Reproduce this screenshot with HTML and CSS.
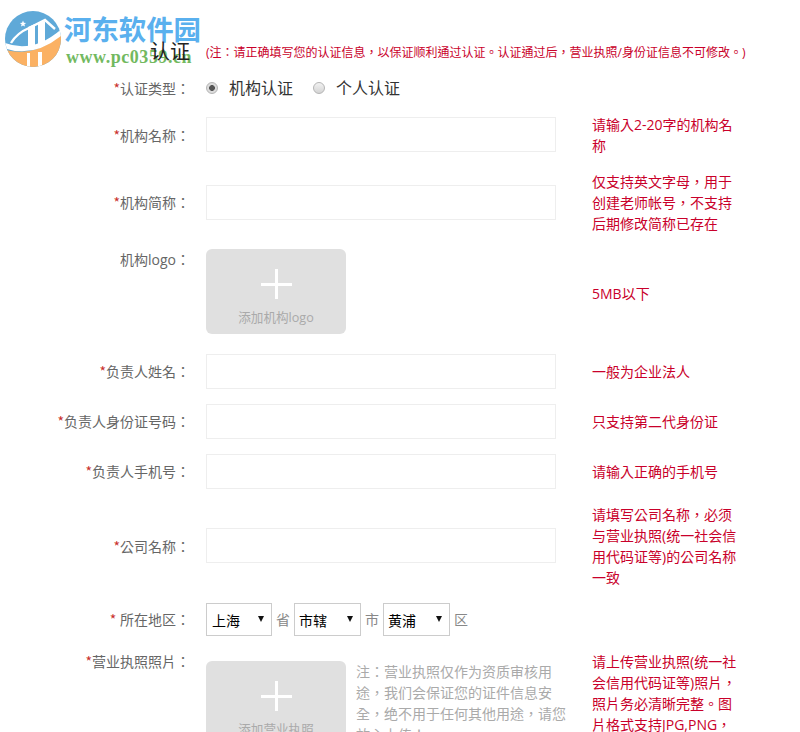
FILE: index.html
```html
<!DOCTYPE html>
<html lang="zh-TW">
<head>
<meta charset="utf-8">
<title>认证</title>
<link rel="stylesheet" href="styles.css">
</head>
<body>
<div class="watermark">
  <svg class="wm-icon" viewBox="0 0 56 56" width="56" height="56">
    <defs><clipPath id="disc"><circle cx="28" cy="28" r="28"/></clipPath></defs>
    <g clip-path="url(#disc)">
      <rect width="56" height="56" fill="#5fa9d8"/>
      <path d="M-2 38Q28 48 58 22V58H-2Z" fill="#fbb163"/>
      <path d="M-2 34Q28 46 58 20" fill="none" stroke="#fff" stroke-width="5"/>
      <path d="M6 32Q12 22 24 17L40 9 50 18" fill="none" stroke="#fff" stroke-width="2.4"/>
      <path d="M23 16 30 13V37L23 36ZM33 12 40 10V34L33 36Z" fill="#fff"/>
      <path d="M22 42H25V56H22ZM33 41H37V56H33Z" fill="#fff"/>
    </g>
    <path d="M18 9.5 18.9 11.7 21.2 11.9 19.4 13.3 20 15.6 18 14.4 16 15.6 16.6 13.3 14.8 11.9 17.1 11.7Z" fill="#fff"/>
  </svg>
  <div class="wm-name">河东软件园</div>
  <div class="wm-url">www.pc0359.cn</div>
</div>

<form class="form">
  <div class="row row-head">
    <div class="label title">认证</div>
    <div class="head-note">(注：请正确填写您的认证信息，以保证顺利通过认证。认证通过后，营业执照/身份证信息不可修改。)</div>
  </div>

  <div class="row">
    <div class="label"><span class="star">*</span>认证类型：</div>
    <div class="field radios">
      <span class="radio radio-on"></span><span class="radio-text">机构认证</span>
      <span class="radio"></span><span class="radio-text">个人认证</span>
    </div>
  </div>

  <div class="row row-center">
    <div class="label"><span class="star">*</span>机构名称：</div>
    <div class="field field-up"><input class="text-input" type="text"></div>
    <div class="note">请输入2-20字的机构名称</div>
  </div>

  <div class="row row-center">
    <div class="label"><span class="star">*</span>机构简称：</div>
    <div class="field"><input class="text-input" type="text"></div>
    <div class="note">仅支持英文字母，用于创建老师帐号，不支持后期修改简称已存在</div>
  </div>

  <div class="row row-upload">
    <div class="label">机构logo：</div>
    <div class="field">
      <div class="upload">
        <span class="plus"></span>
        <span class="upload-text">添加机构logo</span>
      </div>
    </div>
    <div class="note note-mid">5MB以下</div>
  </div>

  <div class="row row-center">
    <div class="label"><span class="star">*</span>负责人姓名：</div>
    <div class="field"><input class="text-input" type="text"></div>
    <div class="note">一般为企业法人</div>
  </div>

  <div class="row row-center">
    <div class="label"><span class="star">*</span>负责人身份证号码：</div>
    <div class="field"><input class="text-input" type="text"></div>
    <div class="note">只支持第二代身份证</div>
  </div>

  <div class="row row-center">
    <div class="label"><span class="star">*</span>负责人手机号：</div>
    <div class="field"><input class="text-input" type="text"></div>
    <div class="note">请输入正确的手机号</div>
  </div>

  <div class="row row-center">
    <div class="label"><span class="star">*</span>公司名称：</div>
    <div class="field field-up"><input class="text-input" type="text"></div>
    <div class="note">请填写公司名称，必须与营业执照(统一社会信用代码证等)的公司名称一致</div>
  </div>

  <div class="row row-center">
    <div class="label"><span class="star">*</span> 所在地区：</div>
    <div class="field region">
      <span class="select-box"><select class="select"><option>上海</option></select></span>
      <span class="unit">省</span>
      <span class="select-box select-wide"><select class="select"><option>市辖</option></select></span>
      <span class="unit">市</span>
      <span class="select-box select-wide"><select class="select"><option>黄浦</option></select></span>
      <span class="unit">区</span>
    </div>
  </div>

  <div class="row">
    <div class="label"><span class="star">*</span>营业执照照片：</div>
    <div class="field license">
      <div class="upload">
        <span class="plus"></span>
        <span class="upload-text">添加营业执照</span>
      </div>
      <div class="license-note">注：营业执照仅作为资质审核用途，我们会保证您的证件信息安全，绝不用于任何其他用途，请您放心上传！</div>
    </div>
    <div class="note">请上传营业执照(统一社会信用代码证等)照片，照片务必清晰完整。图片格式支持JPG,PNG，大小不超过5MB</div>
  </div>
</form>
</body>
</html>
```

FILE: styles.css
```css
html, body {
  margin: 0;
  height: 732px;
  overflow: hidden;
  background: #fff;
}

body {
  position: relative;
  font-family: "Open Sans", "Noto Sans CJK TC", sans-serif;
  font-size: 14px;
  line-height: 21px;
  color: #666;
}

.watermark {
  position: absolute;
  left: 5px;
  top: 11px;
  width: 200px;
  height: 60px;
}

.wm-icon {
  position: absolute;
  left: 0;
  top: 0;
}

.wm-name {
  position: absolute;
  left: 59px;
  top: 0;
  font-size: 27.4px;
  line-height: 37px;
  font-weight: 700;
  color: #5ab0ee;
  white-space: nowrap;
}

.wm-url {
  position: absolute;
  left: 61px;
  top: 36px;
  font-family: "Liberation Serif", serif;
  font-size: 18px;
  line-height: 20px;
  font-weight: 700;
  letter-spacing: 0.55px;
  color: #72b95f;
  white-space: nowrap;
}

.form {
  position: relative;
  display: flex;
  flex-direction: column;
  gap: 15px;
  padding-top: 40px;
}

.row {
  display: grid;
  grid-template-columns: 190px 370px 150px;
  column-gap: 16px;
}

.row-center {
  align-items: center;
}

.row-upload {
  margin-bottom: 5px;
}

.row-head {
  display: flex;
  column-gap: 16px;
  align-items: center;
  height: 23px;
}

.label {
  width: 190px;
  flex: none;
  text-align: right;
  white-space: pre;
}

.title {
  font-size: 20px;
  color: #222;
}

.head-note {
  margin-top: 2px;
  font-size: 12px;
  color: #c9002a;
  white-space: nowrap;
}

.star {
  font-family: "Noto Sans CJK SC", sans-serif;
  color: #c9302c;
}

.field-up {
  margin-top: -1px;
}

.radios {
  display: flex;
  align-items: center;
  font-size: 16px;
  color: #333;
  white-space: nowrap;
}

.radio {
  width: 12px;
  height: 12px;
  box-sizing: border-box;
  margin: 0 11px 1px 0;
  border-radius: 50%;
  border: 1px solid #b5b5b5;
  background: linear-gradient(#f2f2f2, #d4d4d4);
  flex: none;
}

.radio-on {
  background: radial-gradient(circle, #555 0 2.6px, #dcdcdc 3.2px);
}

.radio-text {
  margin-right: 20px;
}

.text-input {
  display: block;
  width: 350px;
  height: 35px;
  box-sizing: border-box;
  border: 1px solid #eee;
  background: #fff;
  padding: 0 8px;
  margin: 0;
  outline: 0;
}

.note {
  width: 150px;
  color: #c9002a;
}

.note-mid {
  align-self: center;
  margin-top: 3px;
}

.upload {
  display: flex;
  flex-direction: column;
  align-items: center;
  width: 140px;
  height: 85px;
  flex: none;
  box-sizing: border-box;
  padding-top: 20px;
  border-radius: 6px;
  background: #e0e0e0;
}

.plus {
  width: 31px;
  height: 30px;
  margin-bottom: 2px;
  background:
    linear-gradient(#fff, #fff) center / 3px 100% no-repeat,
    linear-gradient(#fff, #fff) center / 100% 3px no-repeat;
}

.upload-text {
  margin-top: 8px;
  font-size: 12.6px;
  line-height: 18px;
  color: #aaa;
  white-space: nowrap;
}

.region {
  display: flex;
  align-items: center;
}

.select-box {
  position: relative;
  display: block;
  width: 66px;
  height: 33px;
  flex: none;
}

.select-wide {
  width: 67px;
}

.select-box::after {
  content: "";
  position: absolute;
  right: 8px;
  top: 13px;
  border-left: 3px solid transparent;
  border-right: 3px solid transparent;
  border-top: 6px solid #111;
  pointer-events: none;
}

.select {
  appearance: none;
  display: block;
  width: 100%;
  height: 100%;
  box-sizing: border-box;
  margin: 0;
  padding: 1px 0 0 5px;
  border: 1px solid #ccc;
  border-radius: 0;
  background: #fff;
  font-family: inherit;
  font-size: 14px;
  color: #000;
}

.select-wide .select {
  padding-left: 4px;
}

.unit {
  width: 22px;
  flex: none;
  text-align: center;
  color: #888;
}

.license {
  display: flex;
  column-gap: 10px;
  padding-top: 10px;
  align-items: flex-start;
}

.license-note {
  width: 212px;
  color: #aaa;
}
```
